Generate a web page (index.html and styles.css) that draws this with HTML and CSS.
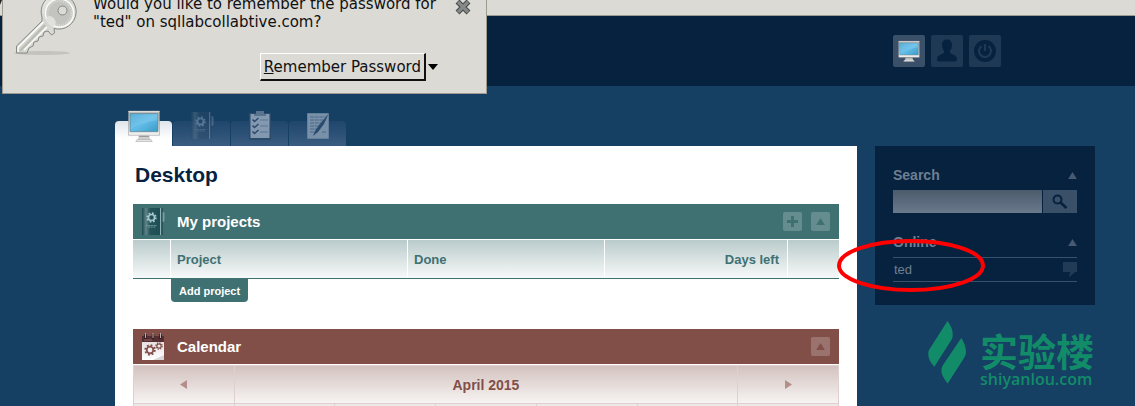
FILE: index.html
```html
<!DOCTYPE html>
<html lang="en">
<head>
<meta charset="utf-8">
<title>Desktop</title>
<link rel="stylesheet" href="styles.css">
</head>
<body>
<svg class="defs" aria-hidden="true">
  <defs>
    <linearGradient id="screen" x1="0" y1="0" x2="1" y2="1"><stop offset="0" stop-color="#3f9fd0"/><stop offset=".5" stop-color="#62bde8"/><stop offset="1" stop-color="#3a9ac6"/></linearGradient>
    <linearGradient id="casing" x1="0" y1="0" x2="0" y2="1"><stop offset="0" stop-color="#b8b8b4"/><stop offset="1" stop-color="#f4f4f2"/></linearGradient>
    <linearGradient id="metal" x1="0" y1="0" x2="1" y2="1"><stop offset="0" stop-color="#fafafa"/><stop offset=".5" stop-color="#d3d4ce"/><stop offset="1" stop-color="#f2f3f0"/></linearGradient>
    <linearGradient id="cover" x1="0" y1="0" x2="1" y2="0"><stop offset="0" stop-color="#1d474c"/><stop offset=".2" stop-color="#5f8588"/><stop offset=".4" stop-color="#24545a"/><stop offset="1" stop-color="#1e4c52"/></linearGradient>
    <linearGradient id="paper" x1="0" y1="0" x2="0" y2="1"><stop offset="0" stop-color="#ded6d9"/><stop offset="1" stop-color="#ffffff"/></linearGradient>
  </defs>
  <symbol id="monitor" viewBox="0 0 32 32">
    <path d="M1 1h30v23.500H1z" fill="url(#casing)" stroke="#8e9294" stroke-width=".5"/>
    <path d="M1 1h30v1H1z" fill="#dededa"/>
    <path d="M2.500 3.500h27v17.500h-27z" fill="url(#screen)" stroke="#60808f" stroke-width=".7"/>
    <path d="M3 4h26v6C18 12 9 14 3 19z" fill="#9bd7f3" opacity=".3"/>
    <path d="M11 25h10l1 4H10z" fill="#cfcfcb"/><path d="M11 25h10v1H11z" fill="#8c9092"/>
    <path d="M9.500 28.500h13l1.500 2H8z" fill="#e9e9e7" stroke="#999" stroke-width=".5"/>
  </symbol>
  <symbol id="gear" viewBox="-10 -10 20 20">
    <circle r="5.500" fill="none" stroke="currentColor" stroke-width="3"/>
    <circle r="8" fill="none" stroke="currentColor" stroke-width="3" stroke-dasharray="3.140 3.140"/>
  </symbol>
  <symbol id="binder" viewBox="0 0 24 28">
    <path d="M21 4h1q1.500 0 1.500 2v6q0 2-1.500 2h-1z" fill="#79a0a4"/>
    <path d="M1 0h20v27H1z" fill="url(#cover)"/>
    <path d="M19 0h1.500v27H19z" fill="#8bb2b5"/><path d="M20.500 0h1v27h-1z" fill="#123a3f"/>
    <use href="#gear" x="5" y="4" width="11" height="11" color="#a5c8cd"/>
    <path d="M5 17.500h11M7 19h8" stroke="#7fa5a8" stroke-width=".8" stroke-dasharray="2 .6"/>
  </symbol>
  <symbol id="up" viewBox="0 0 10 8"><path d="M5 0l5 8H0z" fill="currentColor"/></symbol>
</svg>

<div class="browser-edge"><svg width="2" height="6" viewBox="0 0 2 6" aria-hidden="true"><path d="M0 0h2L0 5z" fill="#222"/></svg></div>

<header class="top">
  <nav class="top-nav" aria-label="Account">
    <a class="top-link current" href="#desktop" aria-label="Desktop"><svg width="22" height="23"><use href="#monitor"/></svg></a>
    <a class="top-link" href="#profile" aria-label="Profile"><svg width="24" height="24" viewBox="0 0 24 24"><path d="M12 .500c3 0 5 2 5 5.500 0 2.500-1 4.500-2 6v1.500c1 2 7 2 7 7 0 1-1 2-2 2H4c-1 0-2-1-2-2 0-5 6-5 7-7V12C8 10.500 7 8.500 7 6 7 2.500 9 .500 12 .500z" fill="#06223f"/></svg></a>
    <a class="top-link" href="#logout" aria-label="Log out"><svg width="24" height="24" viewBox="0 0 24 24"><circle cx="12" cy="12" r="11" fill="#06223f"/><path d="M8.500 7.200a6 6 0 1 0 7 0M12 5v7" fill="none" stroke="#1f3955" stroke-width="2.200"/></svg></a>
  </nav>
</header>

<div class="layout">
  <main class="main">
    <nav class="tabs" aria-label="Sections">
      <a class="tab active" href="#desktop" aria-label="Desktop"><svg width="34" height="33"><use href="#monitor"/></svg></a>
      <a class="tab" href="#projects" aria-label="Projects"><svg class="tab-icon dim" width="24" height="28"><use href="#binder"/></svg></a>
      <a class="tab" href="#tasks" aria-label="Tasks"><svg class="tab-icon" width="24" height="30" viewBox="0 0 24 30"><path d="M1 3h22v27H1z" fill="#2b4b6d"/><path d="M2.500 4h19v24h-19z" fill="#8498af"/><path d="M8 1h8v4H8zM6 4h12v2H6z" fill="#587491"/><path d="M12 10h8M12 16h8M12 22h8" stroke="#6d86a1" stroke-width="2"/><path d="M4.500 9.500l2 2 4-3.500M4.500 15.500l2 2 4-3.500M4.500 21.500l2 2 4-3.500" fill="none" stroke="#2b4a6c" stroke-width="1.500"/></svg></a>
      <a class="tab" href="#notes" aria-label="Notes"><svg class="tab-icon" width="24" height="28" viewBox="0 0 24 28"><path d="M1.500 1.500h21v25h-21z" fill="#7990a9" stroke="#647f9b"/><path d="M4 5h16M4 8h15M4 11h12M4 14h9M4 17h8M4 20h5M16 20h4" stroke="#4c6988" stroke-width="1" stroke-dasharray="4 .7"/><path d="M22.500 2l-4.500 10-6 8-5 4 2-5 4-6z" fill="#294b70"/></svg></a>
    </nav>
    <div class="sheet">
      <h1>Desktop</h1>
      <section class="panel green">
        <header class="bar">
          <svg class="bar-icon" width="24" height="28" aria-hidden="true"><use href="#binder"/></svg>
          <h2>My projects</h2>
          <button class="tool" type="button" aria-label="Add"><svg width="11" height="11" viewBox="0 0 11 11"><path d="M4 0h3v4h4v3H7v4H4V7H0V4h4z" fill="currentColor"/></svg></button>
          <button class="tool" type="button" aria-label="Collapse projects"><svg width="9" height="7"><use href="#up"/></svg></button>
        </header>
        <table class="projects">
          <colgroup><col class="c-icon"><col class="c-name"><col class="c-done"><col><col class="c-tools"></colgroup>
          <thead><tr><td></td><th>Project</th><th>Done</th><th class="right">Days left</th><td></td></tr></thead>
        </table>
        <button class="add" type="button">Add project</button>
      </section>
      <section class="panel red">
        <header class="bar">
          <svg class="bar-icon" width="24" height="28" viewBox="0 0 24 28" aria-hidden="true"><path d="M1 3h22v24H1z" fill="url(#paper)"/><path d="M1 3h22v6H1z" fill="#572f32"/><path d="M3 7h8" stroke="#8c6060"/><path d="M4.500 1v5M12 1v5M19.500 1v5" stroke="#321c20" stroke-width="2.500"/><path d="M4.500 0v5M12 0v5M19.500 0v5" stroke="#b9b0b1"/><use href="#gear" x="3" y="11" width="12" height="12" color="#82514c"/><use href="#gear" x="14" y="9" width="8" height="8" color="#82514c"/><path d="M12 27l11-5v5z" fill="#d9d5d6"/></svg>
          <h2>Calendar</h2>
          <button class="tool" type="button" aria-label="Collapse calendar"><svg width="9" height="7"><use href="#up"/></svg></button>
        </header>
        <table class="calendar">
          <thead>
            <tr class="month">
              <td><a href="#previous" aria-label="Previous month"><svg width="7" height="9" viewBox="0 0 7 9"><path d="M7 0v9L0 4.500z" fill="currentColor"/></svg></a></td>
              <th colspan="5">April 2015</th>
              <td><a href="#next" aria-label="Next month"><svg width="7" height="9" viewBox="0 0 7 9"><path d="M0 0v9l7-4.500z" fill="currentColor"/></svg></a></td>
            </tr>
          </thead>
          <tbody><tr class="days"><td></td><td></td><td></td><td></td><td></td><td></td><td></td></tr></tbody>
        </table>
      </section>
    </div>
  </main>

  <aside class="side">
    <div class="side-box">
      <div class="side-head"><h2><label for="query">Search</label></h2><svg width="9" height="7"><use href="#up"/></svg></div>
      <form class="search">
        <input id="query" type="text">
        <button type="button" aria-label="Search"><svg width="16" height="16" viewBox="0 0 16 16"><circle cx="5.500" cy="5.500" r="4" fill="none" stroke="#06223f" stroke-width="2"/><path d="M8.500 8.500l6 5.500" stroke="#06223f" stroke-width="2.600"/></svg></button>
      </form>
      <div class="side-head online"><h2>Online</h2><svg width="9" height="7"><use href="#up"/></svg>
        <svg class="mark" viewBox="0 0 148 53" aria-hidden="true"><ellipse cx="74" cy="26.500" rx="72" ry="24.500" fill="none" stroke="#f00" stroke-width="4"/></svg>
      </div>
      <ul class="people"><li><a href="#ted">ted</a><svg width="14" height="16" viewBox="0 0 14 16" aria-hidden="true"><path d="M0 0h14v10h-2l-6 5.500 1-5.500H0z" fill="#213b57"/></svg></li></ul>
    </div>
    <div class="brand">
      <svg width="38" height="63" viewBox="0 0 38 63" aria-hidden="true"><path d="M19.500 0C23 5 25 9 24.700 14c0 3-.7 4-2 6L6.300 45.700C2 41 0 37 .300 32c0-2 .7-3 2-5zM33.300 17C36 21 38 26 38 31c0 2-.7 4-2 6L19.700 62.500C16 58 13 53 13.500 49c0-2 .5-3 1.500-5z" fill="#128c68"/></svg>
      <div class="brand-text"><span class="brand-cn" lang="zh">实验楼</span><span class="brand-url">shiyanlou.com</span></div>
    </div>
  </aside>
</div>

<div class="prompt" role="dialog" aria-label="Remember password">
  <svg class="key" width="64" height="66" viewBox="0 0 64 66" aria-hidden="true">
    <ellipse cx="28" cy="63" rx="28" ry="2" fill="#8e8d87" opacity=".3"/>
    <path d="M28 31L2.500 56v7h10.500l2-5 4-2 1-4 4-1 1-4 4-1 1-4 4-1 3.500 4 3-2-.5-4.500A17.500 17.500 0 1 0 28 27z" fill="url(#metal)" stroke="#868882"/>
    <path d="M29.500 32L4 57.500V62M33 37L10 60" fill="none" stroke="#fff" stroke-width="1.300"/>
    <path d="M31 35L6 61" stroke="#b9bcb1" stroke-width="2"/>
    <circle cx="45.500" cy="23" r="14" fill="#c3c4bf" stroke="#fafaf8" stroke-width="1.500"/>
    <circle cx="45.500" cy="23" r="12" fill="none" stroke="#d8d9d5" stroke-width="2" stroke-dasharray="1 1"/>
    <ellipse cx="37" cy="31" rx="4" ry="5.500" transform="rotate(-40 37 31)" fill="#e0e1dc"/>
    <circle cx="48.500" cy="20.500" r="4.500" fill="#dbdad5" stroke="#868882"/>
  </svg>
  <div class="prompt-body">
    <p>Would you like to remember the password for<br>"ted" on sqllabcollabtive.com?</p>
    <div class="prompt-actions">
      <button class="remember" type="button"><u>R</u>emember Password</button>
      <button class="more" type="button" aria-label="More choices"><svg width="10" height="6" viewBox="0 0 10 6"><path d="M0 0h10L5 6z"/></svg></button>
    </div>
  </div>
  <button class="close" type="button" aria-label="Close"><svg width="16" height="16" viewBox="0 0 16 16"><path d="M2.500 2.500l11 11M13.500 2.500l-11 11" stroke="#464a4a" stroke-width="5.500"/><path d="M3 3l10 10M13 3L3 13" stroke="#858987" stroke-width="3.200"/></svg></button>
</div>
</body>
</html>
```
FILE: styles.css
```css
* { box-sizing: border-box; }
body {
  margin: 0;
  height: 100vh;
  overflow: hidden;
  display: flex;
  flex-direction: column;
  background: #163f64;
  font-family: "Liberation Sans", Arial, sans-serif;
  font-size: 13px;
}
svg { display: block; flex: none; }
h1, h2, p, ul { margin: 0; padding: 0; }
a { color: inherit; text-decoration: none; }
button { border: 0; padding: 0; font: inherit; color: inherit; cursor: pointer; }
.defs { position: absolute; width: 0; height: 0; }

.browser-edge { flex: none; height: 16px; background: #dbdad5; border-bottom: 1px solid #9f9a90; }
.top { flex: none; height: 70px; padding: 19px 134px 0 0; background: #06223f; }
.top-nav { display: flex; justify-content: flex-end; gap: 6px; }
.top-link { display: flex; align-items: center; justify-content: center; width: 32px; height: 32px; border-radius: 2px; background: #1f3955; }
.top-link.current { background: #3a4f68; }

.layout { flex: 1; display: flex; gap: 18px; padding: 24px 40px 0 115px; }
.main { flex: 1; display: flex; flex-direction: column; }
.tabs { display: flex; align-items: flex-end; gap: 1px; height: 36px; }
.tab { display: flex; flex-direction: column; align-items: center; justify-content: flex-end; width: 57px; height: 25px; padding-bottom: 3px; border-radius: 4px 4px 0 0; background: linear-gradient(#1f466c, #3a5c80); }
.tab.active { background: linear-gradient(#dfe4ea, #fff 70%); }
.tab-icon { margin-bottom: 3px; }
.tab-icon.dim { opacity: 0.4; filter: hue-rotate(30deg); }
.sheet { flex: 1; padding: 0 18px; background: #fff; }
h1 { padding: 16px 2px 17px; font-size: 21px; line-height: 25px; color: #06223f; }

.panel { color: #fff; margin-bottom: 27px; }
.bar { display: flex; align-items: center; gap: 9px; height: 35px; padding: 0 9px 0 8px; margin-bottom: 1px; background: var(--tone); }
.bar h2 { flex: 1; padding-left: 3px; font-size: 15px; }
.green { --tone: #3f7173; --tool: #658d8f; }
.red { --tone: #824f48; --tool: #9b736e; }
.tool { display: flex; align-items: center; justify-content: center; width: 19px; height: 19px; border-radius: 2px; background: var(--tool); color: var(--tone); }
table { width: 100%; table-layout: fixed; border-collapse: collapse; }
th, td { padding: 0; }
.projects { border-collapse: separate; border-spacing: 0; border-bottom: 1px solid #3f7173; color: #3f7173; }
.projects thead { background: linear-gradient(#bacbcb, #f7f9f9); }
.projects tr { height: 38px; }
.projects th { padding: 0 6px; text-align: left; }
.projects td + th, .projects th + th, .projects th + td { border-left: 1px solid #fff; }
.projects th.right { padding-right: 8px; text-align: right; }
.c-icon { width: 37px; }
.c-name { width: 237px; }
.c-done { width: 197px; }
.c-tools { width: 52px; }
.add { display: block; height: 23px; margin-left: 38px; padding: 0 8px; border-radius: 0 0 4px 4px; background: #3f7173; font-size: 11px; font-weight: bold; }
.calendar { color: #824f48; }
.calendar th, .calendar td { border: 1px solid #dfcfce; }
.calendar thead { background: linear-gradient(#d2c2bf, #f8f5f4); }
.month { height: 38px; font-size: 14px; }
.month a { display: flex; justify-content: center; color: #b38e8a; }
.days { height: 26px; background: #efe8e8; }

.side { width: 220px; padding-top: 36px; }
.side-box { padding: 18px 18px 23px; background: #06223f; color: #6f7f91; }
.side-head { display: flex; align-items: center; justify-content: space-between; height: 22px; margin-bottom: 4px; color: #485a71; }
.side-head h2 { font-size: 14px; color: #6f7f91; }
.online { position: relative; }
.search { display: flex; gap: 1px; height: 23px; margin-bottom: 18px; }
.search input { flex: 1; min-width: 0; border: 0; padding: 0 4px; background: linear-gradient(#4b5b6c, #6a7a8d); color: #fff; font: inherit; }
.search button { display: flex; align-items: center; justify-content: center; width: 34px; background: #3a4f68; }
.people { list-style: none; }
.people li { display: flex; align-items: center; justify-content: space-between; height: 25px; padding-left: 1px; border: solid #39506a; border-width: 1px 0; }
.mark { position: absolute; left: -56px; top: 8px; width: 148px; height: 53px; }

.brand { display: flex; gap: 14px; padding: 16px 0 0 53px; color: #128c68; }
.brand-text { display: flex; flex-direction: column; padding-top: 10px; white-space: nowrap; }
.brand-cn { font: bold 38px/38px "Noto Sans CJK SC", sans-serif; }
.brand-url { font: 600 16px/20px "Open Sans", sans-serif; }

.prompt { position: absolute; left: 2px; top: -6px; display: flex; width: 485px; height: 100px; padding: 0 15px 0 11px; border: 1px solid #9f9a90; background: #dbdad5; color: #111; font: 15px/18px "DejaVu Sans", sans-serif; }
.key { margin-top: -5px; }
.prompt-body { flex: 1; padding-left: 15px; }
.prompt-actions { display: flex; align-items: center; justify-content: flex-end; gap: 2px; margin: 22px 17px 0 0; }
.remember { height: 28px; padding: 0 3px; border: solid; border-width: 1px 2px 2px 1px; border-color: #fff #111 #111 #fff; background: #dbdad5; }
.more { background: none; }
.close { align-self: flex-start; margin-top: 4px; background: none; }
```
